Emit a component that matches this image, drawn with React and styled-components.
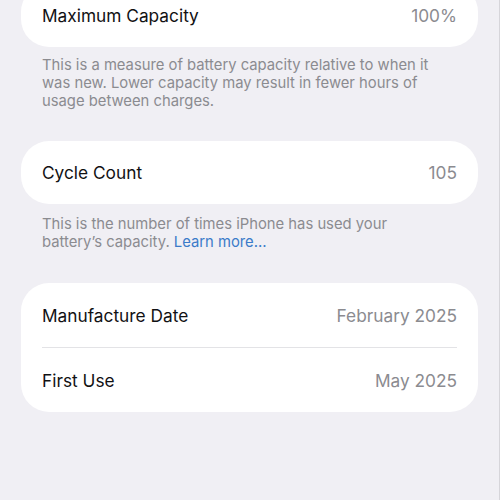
import React from "react";
import styled, { createGlobalStyle } from "styled-components";

const GlobalStyle = createGlobalStyle`
  html, body {
    margin: 0;
    padding: 0;
    background: #f0eff4;
  }
  body {
    font-family: Inter, "Liberation Sans", sans-serif;
    -webkit-font-smoothing: antialiased;
  }
`;

const Page = styled.div`
  width: 500px;
  height: 500px;
  overflow: hidden;
  box-sizing: border-box;
  background: #f0eff4;
  border-right: 1px solid #d6d5da;
  padding: 0 21px;
`;

const Inner = styled.div`
  margin-top: -16px;
  display: flex;
  flex-direction: column;
`;

const Card = styled.div`
  background: #ffffff;
  border-radius: 28px;
  padding: 0 21px;
  margin-top: ${(p) => p.$top || 0}px;
`;

const Row = styled.div`
  height: ${(p) => p.$h || 63}px;
  display: flex;
  align-items: center;
  justify-content: space-between;
  border-bottom: ${(p) => (p.$divider ? "1px solid #e3e3e6" : "none")};
`;

const Label = styled.span`
  font-size: 17.3px;
  color: #111113;
`;

const Value = styled.span`
  font-size: 17.3px;
  color: #8b8b90;
`;

const Note = styled.p`
  margin: ${(p) => p.$top || 9}px 0 0;
  padding: 0 30px 0 21px;
  font-size: 14.8px;
  line-height: 18px;
  color: #8b8b90;
`;

const Link = styled.span`
  color: #3b7bc9;
`;

export default function App() {
  return (
    <>
      <GlobalStyle />
      <Page>
        <Inner>
          <Card>
            <Row>
              <Label>Maximum Capacity</Label>
              <Value>100%</Value>
            </Row>
          </Card>
          <Note>
            This is a measure of battery capacity relative to when it was new.
            Lower capacity may result in fewer hours of usage between charges.
          </Note>
          <Card $top={31}>
            <Row>
              <Label>Cycle Count</Label>
              <Value>105</Value>
            </Row>
          </Card>
          <Note $top={11}>
            This is the number of times iPhone has used your battery’s
            capacity. <Link>Learn more…</Link>
          </Note>
          <Card $top={32}>
            <Row $divider $h={64}>
              <Label>Manufacture Date</Label>
              <Value>February 2025</Value>
            </Row>
            <Row $h={64}>
              <Label>First Use</Label>
              <Value>May 2025</Value>
            </Row>
          </Card>
        </Inner>
      </Page>
    </>
  );
}
